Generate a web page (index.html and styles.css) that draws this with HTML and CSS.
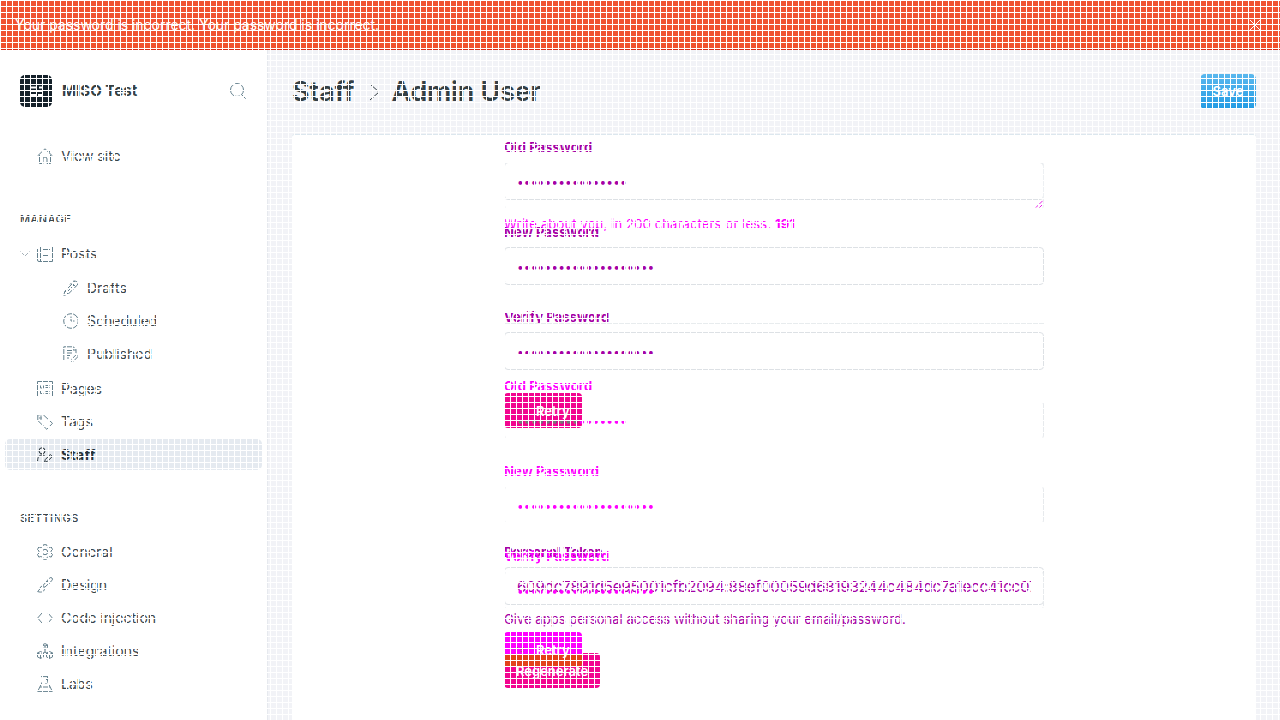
FILE: index.html
```html
<!DOCTYPE html>
<html lang="en">
<head>
<meta charset="utf-8">
<title>Staff - Admin User</title>
<link rel="stylesheet" href="styles.css">
</head>
<body>
<div class="alert"><span class="alert-text">Your password is incorrect. Your password is incorrect.</span>
<svg class="alert-close" viewBox="0 0 12 12"><path d="M1 1l10 10M11 1L1 11"/></svg></div>
<div class="app">
<nav class="sidebar">
  <div class="brand">
    <svg class="logo" viewBox="0 0 32 32"><rect width="32" height="32" rx="5" fill="#15212a"/><path d="M10 12.500h7M19 12.500h3M10 16h12M10 20h6M18 20h4" stroke="#fff" stroke-width="2"/></svg>
    <span class="brand-name">MISO Test</span>
    <svg class="search" viewBox="0 0 16 16"><circle cx="7" cy="7" r="6.500"/><path d="M11.500 11.500l4.200 4.200"/></svg>
  </div>
  <div class="item"><svg class="icon" viewBox="0 0 16 16"><path d="M.5 8L8 .8 15.500 8M2.500 7v8.500h3.500V11a2 2 0 014 0v4.500h3.500V7M12.500 4.500V2"/></svg><span>View site</span></div>
  <div class="heading manage">Manage</div>
  <div class="item"><svg class="caret" viewBox="0 0 10 6"><path d="M.5.5L5 5 9.500.5"/></svg><svg class="icon" viewBox="0 0 16 16"><path d="M2 .5h13.500v15H2q-1.500 0-1.500-1.500V3M3.500.5v15M6 3.500h7M6 6.500h7M6 9.500h5"/></svg><span>Posts</span></div>
  <div class="sub">
    <div class="item"><svg class="icon" viewBox="0 0 16 16"><path d="M.8 15.300l1-4L11 2a2 2 0 013.200 3.200L5 14.300zM2 11l3 3M9.500 3.500l3 3M5 11l6-6M7 4.500L10 1.500q1-1 2-.3"/></svg><span>Drafts</span></div>
    <div class="item"><svg class="icon" viewBox="0 0 16 16"><circle cx="8" cy="8" r="7.300"/><path d="M8 3.500V8h3.500"/></svg><span>Scheduled</span></div>
    <div class="item"><svg class="icon" viewBox="0 0 16 16"><path d="M6 14.500H.8V.8h9.500L13 3.500V7M3 4.500h6M3 7h7M3 9.500h4M3 12h3M8.500 15.400l.6-2.700L13.700 8.200l1.800 1.800-4.500 4.700zM10 .8V4h3"/></svg><span>Published</span></div>
  </div>
  <div class="item"><svg class="icon" viewBox="0 0 16 16"><path d="M.5.5h15v15H.5zM3.500 4.500v2.500h3V4.500M8.500 6.500h4M3.500 10v2.500h3M8.500 4.500h4M8.500 10.500h4M8.500 12.500h4"/></svg><span>Pages</span></div>
  <div class="item"><svg class="icon" viewBox="0 0 16 16"><path d="M.8.8h5.500l9.200 8.500-5.700 6L.8 6.500z"/><circle cx="4" cy="4" r="1.200"/></svg><span>Tags</span></div>
  <div class="item active"><svg class="icon" viewBox="0 0 16 16"><circle cx="5" cy="3.800" r="3"/><path d="M.6 14c0-4 1.700-6 4.400-6 1.500 0 2.500.5 3.200 1.500M7.500 15.300l.8-2.800 5-5 2 2-5 5z"/></svg><span>Staff</span></div>
  <div class="heading settings">Settings</div>
  <div class="item"><svg class="icon" viewBox="0 0 16 16"><circle cx="8" cy="8" r="2.700"/><path d="M6.500.7h3l.7 2 2 .9 2-.7 1.300 2.600-1.500 1.500v2l1.500 1.500-1.300 2.600-2-.6-2 .8-.7 2h-3l-.7-2-2-.8-2 .6-1.300-2.600L2 9V7L.5 5.500l1.300-2.600 2 .7 2-.9z"/></svg><span>General</span></div>
  <div class="item"><svg class="icon" viewBox="0 0 16 16"><path d="M6 8.500L12.500 1q1.500-1 2.500 0t0 2.500L7.800 10.200zM10 4l2.500 2.500M5.500 9C2.500 9 3.500 13 .6 14.500c4 1.500 7 0 7-3.500z"/></svg><span>Design</span></div>
  <div class="item"><svg class="icon" viewBox="0 0 16 16"><path d="M5 3L.7 8 5 13M11 3l4.300 5L11 13"/></svg><span>Code injection</span></div>
  <div class="item"><svg class="icon" viewBox="0 0 16 16"><path d="M8 .6l2.500 1.200v3L8 6 5.500 4.800v-3zM5.500 2L8 3l2.500-1M8 3v6M3.500 8.500l3 1.400v4l-3 1.500-3-1.500v-4zM.5 10l3 1.500 3-1.500M3.500 11.500v4M12.500 8.500l3 1.400v4l-3 1.500-3-1.500v-4zM9.500 10l3 1.500 3-1.500M12.500 11.500v4M6.500 10L8 9l1.500 1"/></svg><span>Integrations</span></div>
  <div class="item"><svg class="icon" viewBox="0 0 16 16"><path d="M4 .6h8M5.500.6v5L.7 15.400h14.600L10.500 5.600v-5M3 11h10M9 3.500h2M8 8h2"/></svg><span>Labs</span></div>
</nav>
<main class="main">
  <header class="header"><h1 class="title"><span class="crumb">Staff</span><svg class="sep" viewBox="0 0 11 18"><path d="M1 1l9 8-9 8"/></svg><span class="user">Admin User</span></h1><button class="save">Save</button></header>
  <section class="card">
    <div class="form">
      <div class="group"><div class="label">Old Password</div><div class="field dots">••••••••••••••••</div></div>
      <div class="group"><div class="label">New Password</div><div class="field dots">••••••••••••••••••••</div></div>
      <div class="group"><div class="label">Verify Password</div><div class="field dots">••••••••••••••••••••</div></div>
      <button class="btn retry"><svg class="retry-icon" viewBox="0 0 10 8"><path d="M1.500 1v1M4.500 3.500h3M4.500 5.500h3M7.500 1v1"/></svg><span>Retry</span></button>
      <div class="token"><div class="label">Personal Token</div><div class="field token-value"><div class="clip">609dc7891d5e95001cfb2094:88ef00059d68193244c484dc7a1ecc41cc07</div></div><p class="help">Give apps personal access without sharing your email/password.</p></div>
      <button class="btn regenerate">Regenerate</button>
      <div class="ghost">
        <div class="bio"><svg class="handle" viewBox="0 0 9 9"><path d="M1 8.500L8.500 1M5 8.500L8.500 5"/></svg></div>
        <p class="bio-help">Write about you, in 200 characters or less. <b>191</b></p>
        <div class="rule"></div>
        <div class="ghost-form">
          <div class="group"><div class="label">Old Password</div><div class="field dots"><span class="covered">•••••••••</span>•••••••</div></div>
          <div class="group"><div class="label">New Password</div><div class="field dots">••••••••••••••••••••</div></div>
          <div class="group"><div class="label">Verify Password</div><div class="field dots">••••••••••••••••••••</div></div>
          <button class="btn retry"><i class="overlap"></i><svg class="retry-icon" viewBox="0 0 10 8"><path d="M1.500 1v1M4.500 3.500h3M4.500 5.500h3M7.500 1v1"/></svg><span>Retry</span></button>
        </div>
      </div>
    </div>
  </section>
</main>
</div>
<div class="grid"></div>
</body>
</html>
```

FILE: styles.css
```css
* { box-sizing: border-box; }
body { margin: 0; width: 1280px; height: 720px; overflow: hidden; position: relative; background: #fff; color: #394449; font: 14px/20px Inter, "Liberation Sans", sans-serif; }
button { border: 0; font: inherit; }
svg { fill: none; stroke: #64808d; stroke-width: 1; flex: none; overflow: visible; }
.alert { height: 50px; background: #f05230; border-bottom: 1px solid #d72b18; color: #fff; display: flex; align-items: center; justify-content: space-between; padding: 0 19px 0 15px; font-size: 14px; letter-spacing: -.03px; }
.alert-close { width: 12px; height: 12px; stroke: #fff; }
.app { display: flex; height: 670px; }
.sidebar { width: 268px; flex: none; border-right: 1px solid #e6e9ee; }
.brand { height: 82px; display: flex; align-items: center; padding: 0 21px 0 20px; margin-bottom: 7px; }
.logo { width: 32px; height: 32px; stroke: none; }
.brand-name { margin-left: 10px; font-size: 15px; font-weight: 700; letter-spacing: .05px; color: #343f44; flex: 1; }
.search { width: 16px; height: 16px; }
.item { height: 33px; display: flex; align-items: center; padding-left: 37px; gap: 8px; position: relative; }
.icon { width: 16px; height: 16px; }
.caret { position: absolute; left: 20px; top: 14px; width: 10px; height: 6px; stroke: #a5b1b8; }
.sub { padding: 1px 0 2px 26px; }
.heading { padding-left: 20px; font-size: 11px; font-weight: 500; letter-spacing: .5px; text-transform: uppercase; height: 20px; }
.manage { margin: 37px 0 8px; }
.settings { margin: 38px 0 7px; }
.active { height: 31px; margin: 1px 5px; padding-left: 32px; background: #e5eaf0; border-radius: 5px; font-weight: 700; letter-spacing: .3px; color: #273238; }
.active svg { stroke: #273238; }
.main { flex: 1; background: #f2f3f7; padding: 0 24px; }
.header { height: 84px; display: flex; align-items: center; justify-content: space-between; }
.title { margin: 0; font-size: 27px; font-weight: 600; line-height: 32px; color: #343f44; display: flex; align-items: center; }
.user { letter-spacing: -.3px; }
.sep { width: 11px; height: 18px; margin: 0 12px 0 14px; stroke: #343f44; }
.save { width: 56px; height: 35px; border-radius: 5px; background: linear-gradient(#5ab8ee, #239ce4); color: #fff; font-size: 13px; font-weight: 600; padding: 0; margin-bottom: 2px; }
.card { height: 590px; background: #fff; border-top: 1px solid #dce7ee; border-radius: 3px; padding-left: 212px; }
.form { width: 540px; height: 585px; position: relative; padding-top: 3px; color: #a500a5; }
.group { height: 85px; }
.label { height: 24px; line-height: 19px; font-size: 13px; font-weight: 700; letter-spacing: .08px; }
.field { height: 38px; border: 1px solid #dde1e5; border-radius: 4px; line-height: 38px; padding: 0 12px; overflow: hidden; white-space: nowrap; }
.dots { font-size: 12px; letter-spacing: .12px; line-height: 37px; }
.btn { display: flex; align-items: center; color: #fff; font-size: 13px; font-weight: 600; height: 35px; border-radius: 4px; padding: 0 12px; background: #f2058f; }
.retry { width: 78px; position: relative; gap: 10px; }
.retry-icon { width: 10px; height: 8px; stroke: #b64a82; position: relative; }
.retry span { position: relative; }
.token { padding-top: 115px; }
.token-value { font-size: 15px; letter-spacing: -.12px; }
.clip { overflow: hidden; }
.help { margin: 4px 0 24px; font-size: 13px; letter-spacing: .04px; }
.regenerate { width: 96px; }
.ghost { position: absolute; left: 0; top: 0; width: 540px; color: #f0f; pointer-events: none; }
.bio { height: 47px; margin-top: 27px; border: 1px solid #edf0f3; border-top-color: transparent; border-bottom-color: transparent; border-radius: 4px; display: flex; align-items: flex-end; justify-content: flex-end; }
.handle { width: 8px; height: 8px; stroke: #e600e6; }
.bio-help { margin: 5px 0 0; height: 22px; font-size: 13px; letter-spacing: .15px; }
.rule { height: 1px; margin-top: 87px; background: #e8ecee; }
.ghost-form { padding-top: 53px; }
.ghost-form .field { border-color: #e7eaed; border-top-color: transparent; border-bottom-color: transparent; }
.ghost-form .retry { background: #f0f; margin-top: 0; }
.covered { color: #777; }
.overlap { position: absolute; left: 0; bottom: 0; width: 78px; height: 13px; background: #e3421b; border-radius: 0 0 4px 4px; }
.grid { position: absolute; inset: 0; z-index: 10; pointer-events: none; background: repeating-linear-gradient(90deg, #fff 0 1px, transparent 1px 6px), repeating-linear-gradient(#fff 0 1px, transparent 1px 6px); }
```
